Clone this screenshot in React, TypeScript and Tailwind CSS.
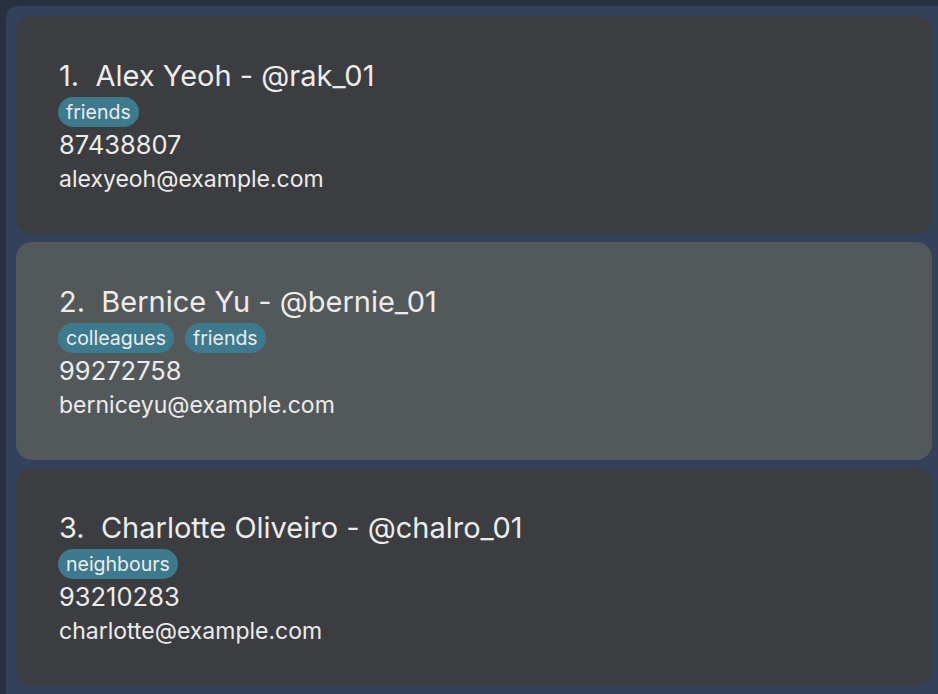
import React from 'react';

interface Person {
  name: string;
  handle: string;
  tags: string[];
  phone: string;
  email: string;
}

const people: Person[] = [
  { name: 'Alex Yeoh', handle: '@rak_01', tags: ['friends'], phone: '87438807', email: 'alexyeoh@example.com' },
  { name: 'Bernice Yu', handle: '@bernie_01', tags: ['colleagues', 'friends'], phone: '99272758', email: 'berniceyu@example.com' },
  { name: 'Charlotte Oliveiro', handle: '@chalro_01', tags: ['neighbours'], phone: '93210283', email: 'charlotte@example.com' },
];

const PersonCard: React.FC<{ person: Person; index: number; selected: boolean }> = ({ person, index, selected }) => (
  <div
    className={`h-[218px] shrink-0 rounded-2xl pl-[43px] pt-[42px] text-[#ececec] ${
      selected ? 'bg-[#53595b]' : 'bg-[#3c3d40]'
    }`}
  >
    <div className="text-[29px] leading-[36px]">
      {index + 1}.&nbsp; {person.name} - {person.handle}
    </div>
    <div className="mt-[3px] ml-[-1px] flex gap-[11px]">
      {person.tags.map((tag) => (
        <span key={tag} className="rounded-full bg-[#3e7a8d] px-[8px] text-[19.5px] leading-[30px]">
          {tag}
        </span>
      ))}
    </div>
    <div className="text-[25.5px] leading-[35px]">{person.phone}</div>
    <div className="text-[23px] leading-[35px]">{person.email}</div>
  </div>
);

export default function App() {
  return (
    <div className="h-[694px] w-[938px] overflow-hidden bg-[#27313f] pl-[6px] pt-[6px] font-['Inter',sans-serif]">
      <div className="flex h-[720px] flex-col gap-2 rounded-tl-xl bg-[#33425a] py-[10px] pl-[10px] pr-[6px]">
        {people.map((p, i) => (
          <PersonCard key={p.handle} person={p} index={i} selected={i === 1} />
        ))}
      </div>
    </div>
  );
}
